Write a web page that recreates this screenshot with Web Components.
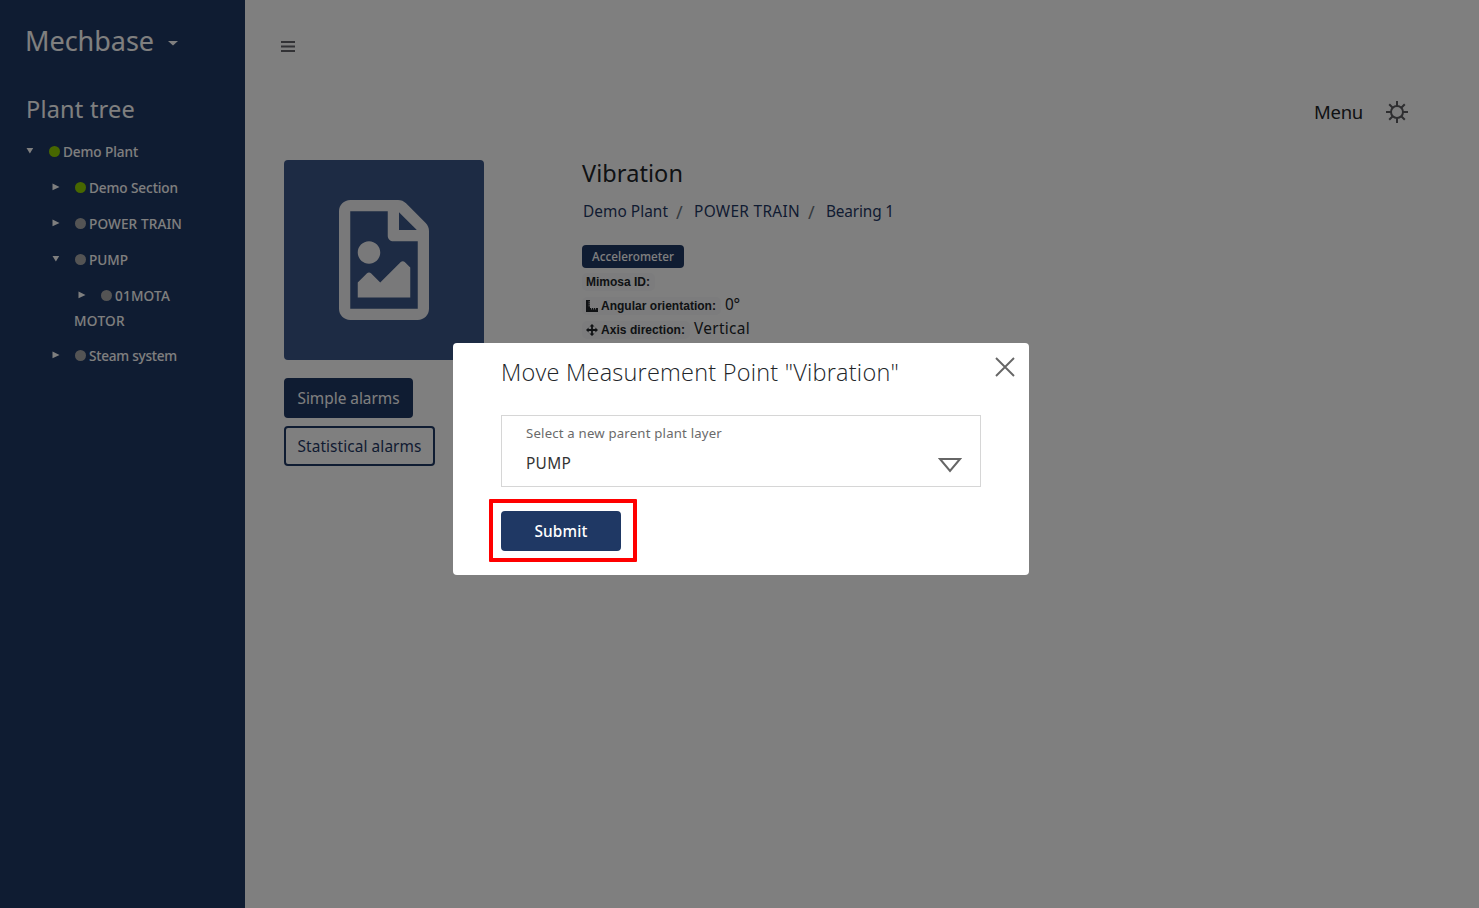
<!DOCTYPE html>
<html lang="en">
<head>
<meta charset="utf-8">
<title>Mechbase</title>
<style>
html,body{margin:0;height:100%;overflow:hidden;background:#fff}
body{font-family:"Noto Sans","Open Sans",sans-serif;color:#212529}
</style>
</head>
<body>
<mech-app></mech-app>
<script>
const define = (name, html, ready) => {
  const tpl = document.createElement('template');
  tpl.innerHTML = html;
  customElements.define(name, class extends HTMLElement {
    connectedCallback() {
      if (this.shadowRoot) return;
      this.attachShadow({mode: 'open'}).append(tpl.content.cloneNode(true));
      if (ready) ready.call(this, this.shadowRoot);
    }
  });
};

/* A one-line label whose tracking is adjusted to fill the width in "w". */
define('fit-text', `<style>:host{display:inline-block;white-space:pre;flex:none}span{display:inline-block}</style><span><slot></slot></span>`, function (root) {
  const s = root.querySelector('span'), w = +this.getAttribute('w'), n = this.textContent.length;
  const natural = s.getBoundingClientRect().width;
  s.style.letterSpacing = ((w - natural) / n).toFixed(3) + 'px';
  this.style.width = w + 'px';
});

/* One tree row: arrow, status dot, label. */
define('tree-row', `<style>
:host{display:flex;align-items:center;height:36px;font-size:13.6px;font-weight:500;line-height:25px;color:#fff;box-sizing:border-box}
.a{width:8px;height:8px;flex:none;margin:-1px 15px 0 0;display:block}
.d{width:11px;height:11px;border-radius:50%;background:#a9a9a9;margin-right:3px;flex:none}
:host([ok]) .d{background:#8fce00}
</style><svg class="a" viewBox="0 0 8 8"><path fill="#fff" d="M.5 .5L7.5 4L.5 7.2z"/></svg><i class="d"></i><slot></slot>`, function (root) {
  this.style.paddingLeft = 26 * this.getAttribute('level') + 'px';
  if (this.hasAttribute('open')) root.querySelector('path').setAttribute('d', 'M.5 1L7.2 1L3.9 6.6z');
});

define('side-bar', `<style>
:host{display:block;width:245px;height:100%;background:#1f3864;color:#fff;box-sizing:border-box;padding:20px 0 0 26px}
.brand{display:flex;align-items:center;height:41px;font-size:27px;line-height:41px;gap:14px;margin-left:-1px}
.brand svg{margin-top:6px}
h2{margin:34px 0 0 0;font-size:23.5px;font-weight:400;line-height:28px;height:38px}
.wrap{font-size:13.6px;font-weight:500;line-height:25px;height:25px;padding-left:48px;margin-top:-5px}
.last{margin-top:4px}
</style>
<div class="brand"><fit-text w="129">Mechbase</fit-text><svg width="10" height="5" viewBox="0 0 10 5"><path fill="#fff" d="M0 0H10L5 4.6z"/></svg></div>
<h2><fit-text w="109">Plant tree</fit-text></h2>
<tree-row level="0" open ok><fit-text w="75">Demo Plant</fit-text></tree-row>
<tree-row level="1" ok><fit-text w="89">Demo Section</fit-text></tree-row>
<tree-row level="1"><fit-text w="93">POWER TRAIN</fit-text></tree-row>
<tree-row level="1" open><fit-text w="39">PUMP</fit-text></tree-row>
<tree-row level="2"><fit-text w="55">01MOTA</fit-text></tree-row>
<div class="wrap"><fit-text w="51">MOTOR</fit-text></div>
<tree-row class="last" level="1"><fit-text w="88">Steam system</fit-text></tree-row>`);

define('image-card', `<style>
:host{display:grid;place-items:center;width:200px;height:200px;border-radius:4px;background:#3b5788}svg{display:block}
</style><svg width="90" height="120" viewBox="0 0 384 512"><path fill="#f2f2f4" d="M369.9 98L286 14.100C277 5.100 264.800 0 252.100 0H48C21.500 0 0 21.500 0 48v416c0 26.500 21.500 48 48 48h288c26.500 0 48-21.500 48-48V131.900c0-12.700-5.100-25-14.100-33.900zM332.100 128H256V51.900L332.100 128zM48 464V48h160v104c0 13.300 10.700 24 24 24h104v288H48zm32-48h224V288l-23.500-23.500c-4.700-4.700-12.300-4.700-17 0L176 352l-39.500-39.500c-4.700-4.700-12.300-4.700-17 0L80 352v64zm48-240c-26.500 0-48 21.500-48 48s21.500 48 48 48 48-21.500 48-48-21.500-48-48-48z"/></svg>`);

define('mech-button', `<style>
:host{display:flex;align-items:center;justify-content:center;box-sizing:border-box;height:40px;border:2px solid #1f3864;border-radius:4px;background:#1f3864;color:#fff;font-size:15.4px;line-height:24px;padding-top:2px}
:host([outline]){background:none;color:#1f3864}
</style><slot></slot>`);

define('detail-line', `<style>
:host{display:flex;align-items:center;height:24px}
.k{display:flex;align-items:center;height:18px;box-sizing:border-box;padding:0 5px 0 4px;background:#f8f9fa;border-radius:5px;font:bold 12px/18px "Liberation Sans",Arial,sans-serif;color:#212529;margin-right:4px}
.v{font-size:15.400px;line-height:24px;margin-top:-2px}
::slotted(svg){margin-right:3px;flex:none}
</style><div class="k"><slot name="icon"></slot><slot name="key"></slot></div><div class="v"><slot></slot></div>`);

define('point-details', `<style>
:host{display:block;width:330px}
h1{margin:-1px 0 0;font-size:23.500px;font-weight:400;line-height:28px;height:41px}
nav{display:flex;height:24px;line-height:24px;font-size:15.400px;color:#1f3864;padding-left:1px}
.s{color:#6c757d;width:7px;margin:0 11px 0 8px;font-size:18px}
.badge{display:flex;align-items:center;justify-content:center;width:102px;height:23px;margin:21px 0 2px;border-radius:4px;background:#1f3864;color:#fff;font-size:11.700px;font-weight:500;line-height:20px;padding-bottom:2px;box-sizing:border-box}
</style>
<h1><fit-text w="101">Vibration</fit-text></h1>
<nav><fit-text w="85">Demo Plant</fit-text><span class="s">/</span><fit-text w="106">POWER TRAIN</fit-text><span class="s">/</span><fit-text w="68">Bearing 1</fit-text></nav>
<div class="badge"><fit-text w="82">Accelerometer</fit-text></div>
<detail-line><fit-text slot="key" w="64">Mimosa ID:</fit-text></detail-line>
<detail-line><svg slot="icon" width="12" height="12" viewBox="0 0 12 12"><path fill="#212529" d="M0 0H4V1.500H2.500V2.300H4V3.500H2.500V4.300H4V5.500H2.500V6.300H4V8H5V9.400H5.800V8H7V9.400H7.800V8H9V9.400H9.800V8H12V12H0z"/></svg><fit-text slot="key" w="115">Angular orientation:</fit-text><fit-text w="15">0°</fit-text></detail-line>
<detail-line><svg slot="icon" width="12" height="12" viewBox="0 0 12 12"><path fill="#212529" d="M6 0L8.500 2.600H6.900V5.100H9.400V3.500L12 6L9.400 8.500V6.900H6.900V9.400H8.500L6 12L3.500 9.400H5.100V6.900H2.600V8.500L0 6L2.600 3.500V5.100H5.100V2.600H3.500z"/></svg><fit-text slot="key" w="84">Axis direction:</fit-text><fit-text w="56">Vertical</fit-text></detail-line>`);

define('main-view', `<style>
:host{display:block;flex:1;background:#fff;box-sizing:border-box;padding:40px 71px 0 39px}
svg{display:block}
.burger{margin-left:-3px}
.top{display:flex;justify-content:flex-end;align-items:center;gap:23px;height:30px;margin-top:45px;font-size:18.500px;color:#212529}
.top fit-text{margin-top:-2px}
.body{display:flex;margin-top:33px}
.left{width:298px}
.simple{width:129px;margin-top:18px}.stat{width:151px;margin-top:8px}
</style>
<svg class="burger" width="14" height="12" viewBox="0 0 14 12"><path stroke="#65656a" stroke-width="2" d="M0 2H14M0 6.500H14M0 11H14"/></svg>
<div class="top"><fit-text w="49">Menu</fit-text><svg width="22" height="22" viewBox="0 0 22 22" fill="none" stroke="#5c5c60" stroke-width="2"><circle cx="11" cy="11" r="6"/><path d="M11 0V5M11 17V22M0 11H5M17 11H22M3.200 3.200L6.700 6.700M15.300 15.300L18.800 18.800M3.200 18.800L6.700 15.300M15.300 6.700L18.800 3.200"/></svg></div>
<div class="body"><div class="left"><image-card></image-card>
<mech-button class="simple"><fit-text w="102">Simple alarms</fit-text></mech-button>
<mech-button class="stat" outline><fit-text w="124">Statistical alarms</fit-text></mech-button></div>
<point-details></point-details></div>`);

define('select-field', `<style>
:host{display:flex;justify-content:space-between;box-sizing:border-box;width:480px;height:72px;border:1px solid #d6d6d6;padding:7px 18px 0 24px}
.l{font-size:13.200px;line-height:20px;color:#6a6a6a}
.v{font-size:15.400px;line-height:24px;margin-top:9px;color:#333}
svg{display:block;margin-top:34px}
</style><div><div class="l"><fit-text w="196">Select a new parent plant layer</fit-text></div><div class="v"><fit-text w="45">PUMP</fit-text></div></div>
<svg width="24" height="16" viewBox="0 0 24 16"><path fill="none" stroke="#666" stroke-width="2" d="M2 2H22L12 14z"/></svg>`);

define('move-dialog', `<style>
:host{display:block;position:relative;width:576px;height:232px;box-sizing:border-box;background:#fff;border-radius:4px;padding:13px 48px 0}
h3{margin:0;height:59px;font-family:"Open Sans","Noto Sans",sans-serif;font-size:23.500px;font-weight:300;line-height:32px;color:#212529}
.x{position:absolute;right:14px;top:14px}
.submit{width:120px;margin-top:24px;font-weight:500}
.ring{position:absolute;left:36px;top:156px;width:148px;height:63px;box-sizing:border-box;border:4px solid #f00;border-radius:1px}
</style><h3><fit-text w="398">Move Measurement Point "Vibration"</fit-text></h3>
<svg class="x" width="20" height="20" viewBox="0 0 20 20"><path stroke="#666" stroke-width="1.900" d="M1 1L19 19M19 1L1 19"/></svg>
<select-field></select-field>
<mech-button class="submit"><fit-text w="53">Submit</fit-text></mech-button>
<div class="ring"></div>`);

define('mech-app', `<style>
:host{display:flex;height:100vh}
.overlay{position:fixed;inset:0;box-sizing:border-box;padding:343px 0 0 453px;background:rgba(0,0,0,.5)}
</style><side-bar></side-bar><main-view></main-view><div class="overlay"><move-dialog></move-dialog></div>`);
</script>
</body>
</html>
